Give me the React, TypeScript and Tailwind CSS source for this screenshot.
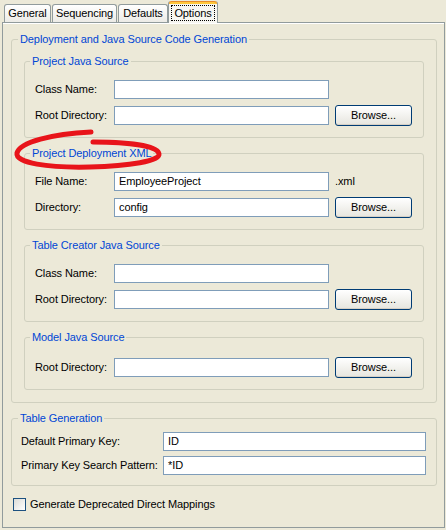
import type { ReactNode } from 'react'

const FONT = "font-['Liberation_Sans',Arial,sans-serif] text-[11px] tracking-[-0.1px] text-black"

function Tab({ label, width, active }: { label: string; width: string; active?: boolean }) {
  if (active) {
    return (
      <div className={`relative z-10 -mb-px flex h-[22px] ${width} flex-col rounded-t-[3px] border-x border-[#919B9C] bg-[#F7F6F1]`}>
        <div className="h-[3px] rounded-t-[3px] bg-[#FFC83C] shadow-[inset_0_1px_0_#E68B2C]" />
        <div className="flex flex-1 items-start justify-center pt-[1px]">
          <span className="border border-dotted border-black px-[2px] leading-[14px]">{label}</span>
        </div>
      </div>
    )
  }
  return (
    <div className={`flex h-[18px] ${width} items-center justify-center rounded-t-[3px] border border-b-0 border-[#919B9C] bg-linear-to-b from-white to-[#ECEBE6]`}>
      {label}
    </div>
  )
}

// XP style group box: the title sits on the top border, the body gets its own padding
function Group({ title, className = '', bodyClass = '', titleIndent = 'ml-[6px]', children }: { title: string; className?: string; bodyClass?: string; titleIndent?: string; children: ReactNode }) {
  return (
    <div className={`rounded-[3px] border border-[#D0D0BF] ${className}`}>
      <div className={`-mt-[7px] h-[13px] leading-[13px] ${titleIndent}`}>
        <span className="bg-[#ECE9D8] px-[2px] text-[#0046D5]">{title}</span>
      </div>
      <div className={bodyClass}>{children}</div>
    </div>
  )
}

function Input({ value = '', width }: { value?: string; width: string }) {
  return (
    <div className={`flex h-[19px] ${width} items-center border border-[#7F9DB9] bg-white px-[4px]`}>
      {value}
    </div>
  )
}

function BrowseButton() {
  return (
    <button className="ml-[6px] flex h-[21px] w-[77px] items-center justify-center rounded-[3px] border border-[#003C74] bg-linear-to-b from-white to-[#E6E5DE] shadow-[inset_0_-1px_0_#D6D0C5]">
      Browse...
    </button>
  )
}

function Row({ label, value, browse, suffix, className = '' }: { label: string; value?: string; browse?: boolean; suffix?: string; className?: string }) {
  return (
    <div className={`flex h-[21px] items-center ${className}`}>
      <span className="w-[79px] shrink-0">{label}</span>
      <Input value={value} width="w-[215px]" />
      {browse && <BrowseButton />}
      {suffix && <span className="ml-[6px]">{suffix}</span>}
    </div>
  )
}

export default function App() {
  return (
    <div className={`relative h-[530px] w-[446px] overflow-hidden bg-[#ECE9D8] ${FONT}`}>
      <div className="flex h-[22px] items-end pl-[4px]">
        <Tab label="General" width="w-[47px]" />
        <div className="ml-[1px]"><Tab label="Sequencing" width="w-[65px]" /></div>
        <div className="ml-[1px]"><Tab label="Defaults" width="w-[50px]" /></div>
        <Tab label="Options" width="w-[50px]" active />
      </div>

      <div className="ml-[2px] h-[506px] w-[443px] border border-[#919B9C] pl-[8px] pr-[7px] shadow-[inset_0_1px_0_#fff]">
        <Group title="Deployment and Java Source Code Generation" className="mt-[16px]" bodyClass="px-[12px] pb-[12px]">
          <Group title="Project Java Source" className="mt-[15px]" bodyClass="pl-[10px] pb-[11px]" titleIndent="ml-[5px]">
            <Row label="Class Name:" className="mt-[11px]" />
            <Row label="Root Directory:" browse className="mt-[5px]" />
          </Group>

          <Group title="Project Deployment XML" className="mt-[15px]" bodyClass="pl-[10px] pb-[11px]" titleIndent="ml-[5px]">
            <Row label="File Name:" value="EmployeeProject" suffix=".xml" className="mt-[11px]" />
            <Row label="Directory:" value="config" browse className="mt-[5px]" />
          </Group>

          <Group title="Table Creator Java Source" className="mt-[15px]" bodyClass="pl-[10px] pb-[11px]" titleIndent="ml-[5px]">
            <Row label="Class Name:" className="mt-[11px]" />
            <Row label="Root Directory:" browse className="mt-[5px]" />
          </Group>

          <Group title="Model Java Source" className="mt-[15px]" bodyClass="pl-[10px] pb-[11px]" titleIndent="ml-[5px]">
            <Row label="Root Directory:" browse className="mt-[13px]" />
          </Group>
        </Group>

        <Group title="Table Generation" className="mt-[15px]" bodyClass="pl-[9px] pb-[10px]">
          <div className="mt-[7px] flex h-[19px] items-center">
            <span className="w-[142px] shrink-0">Default Primary Key:</span>
            <Input value="ID" width="w-[263px]" />
          </div>
          <div className="mt-[5px] flex h-[19px] items-center">
            <span className="w-[142px] shrink-0">Primary Key Search Pattern:</span>
            <Input value="*ID" width="w-[263px]" />
          </div>
        </Group>

        <label className="ml-[2px] mt-[12px] flex h-[13px] items-center leading-[13px]">
          <span className="h-[13px] w-[13px] border border-[#1C5180] bg-linear-to-br from-[#DCDCD7] to-white" />
          <span className="ml-[4px]">Generate Deprecated Direct Mappings</span>
        </label>
      </div>

      <svg className="pointer-events-none absolute inset-0" width="446" height="530" viewBox="0 0 446 530">
        <path
          d="M 91 132 C 52 134, 20 142, 17 153 C 15 163, 48 168, 90 167 C 130 166, 160 161, 159 154 C 158 146, 130 142, 93 142"
          fill="none"
          stroke="#E8141A"
          strokeWidth="5"
          strokeLinecap="round"
        />
      </svg>
    </div>
  )
}
